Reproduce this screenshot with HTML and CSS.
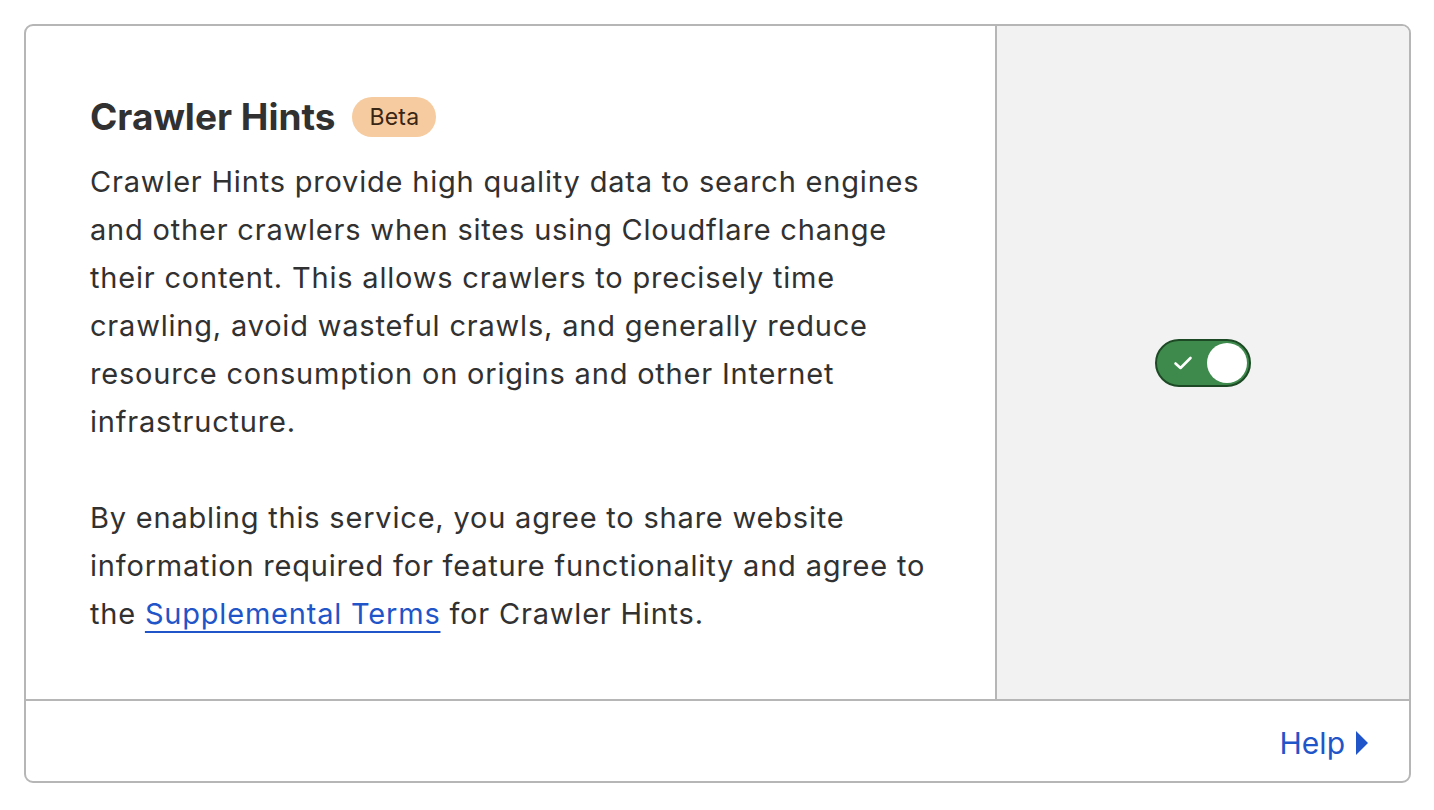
FILE: index.html
```html
<!DOCTYPE html>
<html lang="en">
<head>
<meta charset="utf-8">
<title>Crawler Hints</title>
<link rel="stylesheet" href="styles.css">
</head>
<body>
  <section class="card">
    <div class="card-main">
      <div class="content">
        <h2 class="title">Crawler Hints <span class="badge">Beta</span></h2>
        <p class="text">Crawler Hints provide high quality data to search engines and other crawlers when sites using Cloudflare change their content. This allows crawlers to precisely time crawling, avoid wasteful crawls, and generally reduce resource consumption on origins and other Internet infrastructure.</p>
        <p class="text">By enabling this service, you agree to share website information required for feature functionality and agree to the <a class="link" href="#">Supplemental Terms</a> for Crawler Hints.</p>
      </div>
      <div class="control">
        <button class="toggle" aria-pressed="true" aria-label="Crawler Hints">
          <svg class="check" width="20" height="16" viewBox="0 0 20 16"><path d="M2.5 8.5 L7.5 13 L17.5 3" fill="none" stroke="#fff" stroke-width="2.6" stroke-linecap="round" stroke-linejoin="round"/></svg>
          <span class="knob"></span>
        </button>
      </div>
    </div>
    <div class="card-footer">
      <a class="help" href="#">Help <svg class="caret" width="14" height="26" viewBox="0 0 14 26"><path d="M1 1 L13 13 L1 25 Z" fill="#1f55c8"/></svg></a>
    </div>
  </section>
</body>
</html>
```
FILE: styles.css
```css
* { box-sizing: border-box; }
html, body { margin: 0; padding: 0; background: #fff; }
body {
  padding: 24px;
  font-family: Inter, "Noto Sans", "Liberation Sans", sans-serif;
  color: #313131;
}
.card {
  width: 1387px;
  height: 759px;
  border: 2px solid #b6b6b6;
  border-radius: 9px;
  display: flex;
  flex-direction: column;
  overflow: hidden;
}
.card-main {
  display: flex;
  flex: 1;
  border-bottom: 2px solid #b6b6b6;
}
.content {
  width: 971px;
  padding: 64px 64px 0 64px;
  border-right: 2px solid #b6b6b6;
}
.title {
  margin: 0 0 14px 0;
  font-size: 37px;
  line-height: 54px;
  font-weight: 700;
  display: flex;
  align-items: center;
  gap: 17px;
  letter-spacing: 0;
}
.badge {
  display: inline-flex;
  align-items: center;
  height: 40px;
  padding: 0 17px;
  border-radius: 20px;
  background: #f6cb9f;
  color: #3a2614;
  font-size: 23px;
  font-weight: 400;
  letter-spacing: 0.2px;
}
.text {
  margin: 0 0 48px 0;
  font-size: 29px;
  line-height: 48px;
  letter-spacing: 0.8px;
}
.link {
  color: #1f55c8;
  text-decoration: underline;
  text-decoration-thickness: 2px;
  text-underline-offset: 7px;
}
.control {
  flex: 1;
  background: #f2f2f2;
  display: flex;
  align-items: center;
  justify-content: center;
}
.toggle {
  width: 96px;
  height: 48px;
  border-radius: 24px;
  background: #3e8a4c;
  border: 2px solid #1d4a25;
  padding: 0 2px 0 16px;
  display: flex;
  align-items: center;
  justify-content: space-between;
  cursor: pointer;
}
.check { display: block; }
.knob {
  width: 40px;
  height: 40px;
  border-radius: 50%;
  background: #fff;
}
.card-footer {
  height: 80px;
  display: flex;
  align-items: center;
  justify-content: flex-end;
  padding: 4px 40px 0 0;
}
.help {
  color: #1f55c8;
  text-decoration: none;
  font-size: 30px;
  display: flex;
  align-items: center;
  gap: 10px;
}
.caret { display: block; }
```
